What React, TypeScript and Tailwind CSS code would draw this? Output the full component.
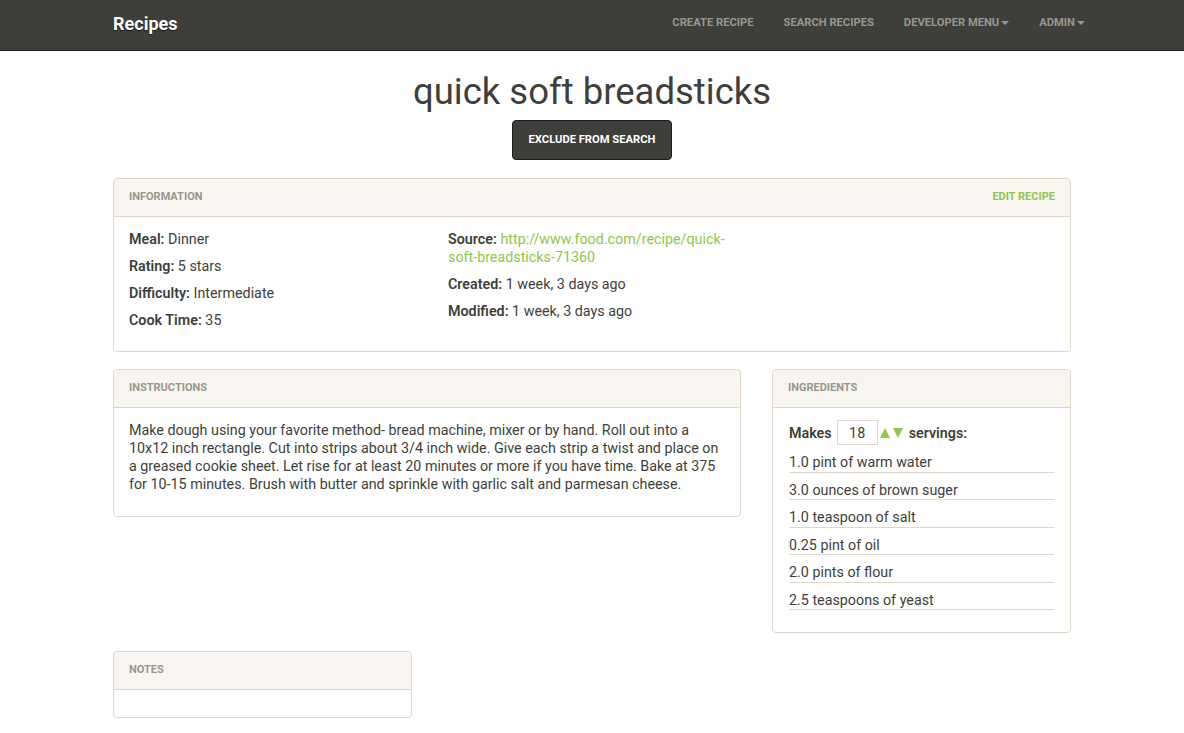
import React from "react";

const ingredients = [
  "1.0 pint of warm water",
  "3.0 ounces of brown suger",
  "1.0 teaspoon of salt",
  "0.25 pint of oil",
  "2.0 pints of flour",
  "2.5 teaspoons of yeast",
];

function Caret() {
  return <span className="ml-[2px] inline-block h-0 w-0 border-x-[4px] border-t-[4px] border-x-transparent border-t-[#98978b] align-middle" />;
}

function PanelHeading({ title, right }: { title: string; right?: React.ReactNode }) {
  return (
    <div className="flex h-[38px] items-center justify-between rounded-t-[4px] border-b border-[#dfd7ca] bg-[#f8f5f0] px-[15px]">
      <span className="text-[11px] font-bold uppercase text-[#98978b]">{title}</span>
      {right}
    </div>
  );
}

export default function App() {
  return (
    <div className="min-h-screen bg-white text-[#3e3f3a]" style={{ fontFamily: "Roboto, 'Liberation Sans', sans-serif" }}>
      {/* Navbar */}
      <nav className="h-[51px] border-b border-[#1f1f1c] bg-[#3e3f3a]">
        <div className="mx-auto flex h-full w-[958px] items-center pb-[4px]">
          <span className="text-[18px] font-bold text-white [text-shadow:0_1px_1px_rgba(0,0,0,0.6)]">Recipes</span>
          <div className="ml-auto mr-[-29px] flex items-center text-[11.2px] font-bold uppercase text-[#98978b]">
            <span className="px-[15px]">Create Recipe</span>
            <span className="px-[15px]">Search Recipes</span>
            <span className="px-[15px]">Developer Menu<Caret /></span>
            <span className="px-[15px]">Admin<Caret /></span>
          </div>
        </div>
      </nav>

      <div className="mx-auto w-[958px]">
        {/* Title */}
        <h1 className="mt-[21px] text-center text-[36.5px] leading-[40px] font-normal text-[#3e3f3a]">quick soft breadsticks</h1>
        <div className="mt-[8px] flex justify-center">
          <button className="h-[40px] w-[160px] rounded-[4px] border border-[#1f1f1c] bg-[#3e3f3a] text-[11.2px] font-bold uppercase text-white">
            Exclude from search
          </button>
        </div>

        {/* Information */}
        <div className="mt-[18px] rounded-[4px] border border-[#dfd7ca] bg-white">
          <PanelHeading
            title="Information"
            right={<span className="text-[11px] font-bold uppercase text-[#93c54b]">Edit Recipe</span>}
          />
          <div className="grid grid-cols-[319px_289px_1fr] px-[15px] pt-[13px] pb-[13px] text-[14.3px] leading-[18px]">
            <div className="pr-[15px]">
              <p className="mb-[9px]"><b className="font-semibold">Meal:</b> Dinner</p>
              <p className="mb-[9px]"><b className="font-semibold">Rating:</b> 5 stars</p>
              <p className="mb-[9px]"><b className="font-semibold">Difficulty:</b> Intermediate</p>
              <p className="mb-[9px]"><b className="font-semibold">Cook Time:</b> 35</p>
            </div>
            <div>
              <p className="mb-[9px]">
                <b className="font-semibold">Source:</b>{" "}
                <span className="text-[#93c54b]">http://www.food.com/recipe/quick-soft-breadsticks-71360</span>
              </p>
              <p className="mb-[9px]"><b className="font-semibold">Created:</b> 1 week, 3 days ago</p>
              <p className="mb-[9px]"><b className="font-semibold">Modified:</b> 1 week, 3 days ago</p>
            </div>
            <div />
          </div>
        </div>

        {/* Instructions + Ingredients */}
        <div className="mt-[17px] flex items-start gap-[31px]">
          <div className="w-[628px] rounded-[4px] border border-[#dfd7ca] bg-white">
            <PanelHeading title="Instructions" />
            <div className="px-[15px] pt-[13px] pb-[23px] text-[14.3px] leading-[18px]">
              Make dough using your favorite method- bread machine, mixer or by hand. Roll out into a 10x12 inch rectangle. Cut into strips about 3/4 inch wide. Give each strip a twist and place on a greased cookie sheet. Let rise for at least 20 minutes or more if you have time. Bake at 375 for 10-15 minutes. Brush with butter and sprinkle with garlic salt and parmesan cheese.
            </div>
          </div>

          <div className="w-[299px] rounded-[4px] border border-[#dfd7ca] bg-white">
            <PanelHeading title="Ingredients" />
            <div className="px-[16px] pt-[12px] pb-[22px] text-[14.3px] leading-[18px]">
              <div className="flex items-center">
                <span className="font-semibold">Makes</span>
                <span className="ml-[5px] flex h-[25px] w-[41px] items-center justify-center border border-[#dfd7ca]">18</span>
                <span className="ml-[2px] inline-block h-0 w-0 border-x-[5.5px] border-b-[10px] border-x-transparent border-b-[#93c54b]" />
                <span className="ml-[3px] inline-block h-0 w-0 border-x-[5.5px] border-t-[10px] border-x-transparent border-t-[#93c54b]" />
                <span className="ml-[6px] font-semibold">servings:</span>
              </div>
              <ul className="w-[265px]">
                {ingredients.map((ing) => (
                  <li key={ing} className="border-b border-[#dfd7ca] pt-[8px] leading-[18.5px]">
                    {ing}
                  </li>
                ))}
              </ul>
            </div>
          </div>
        </div>

        {/* Notes */}
        <div className="mt-[18px] w-[299px] rounded-[4px] border border-[#dfd7ca] bg-white">
          <PanelHeading title="Notes" />
          <div className="h-[27px]" />
        </div>
      </div>
    </div>
  );
}
